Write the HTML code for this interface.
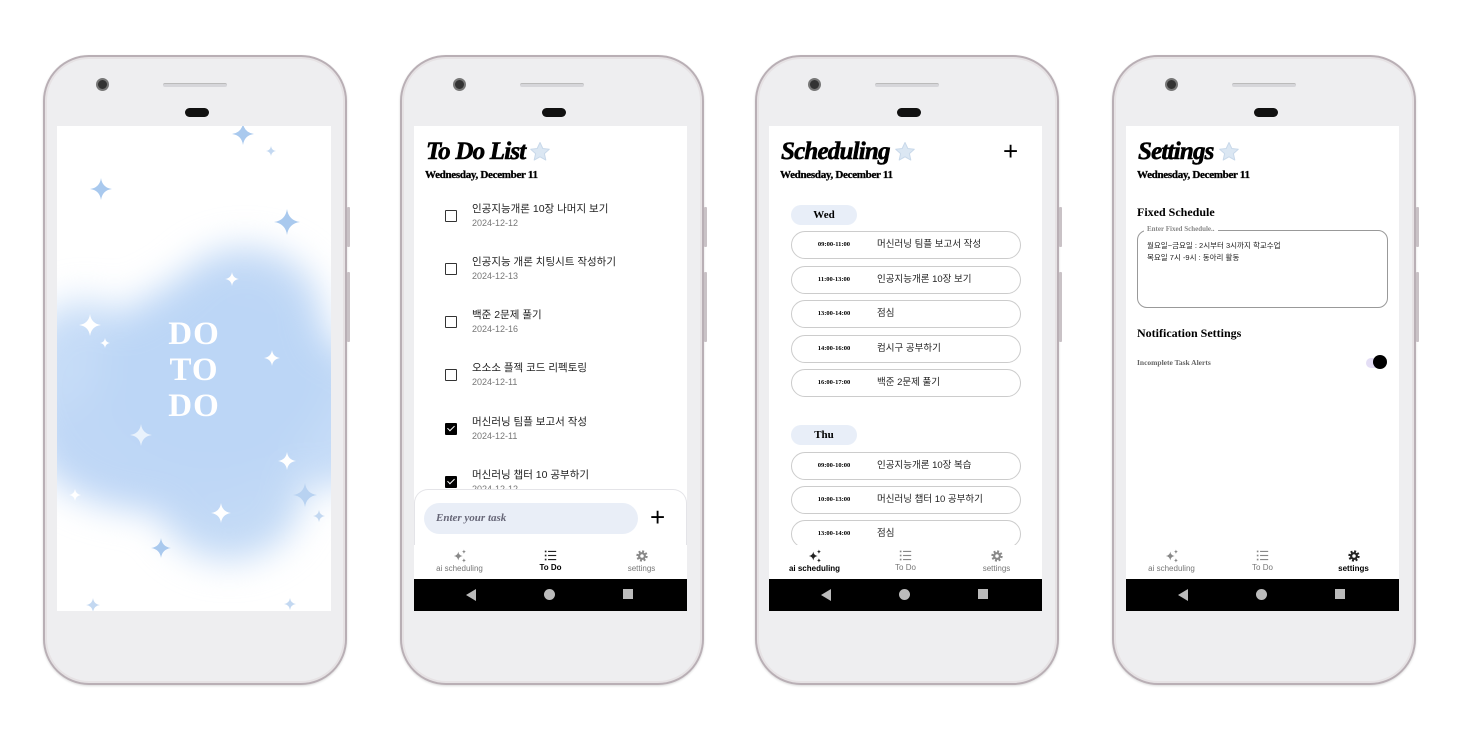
<!DOCTYPE html>
<html><head><meta charset="utf-8"><style>
*{box-sizing:border-box;margin:0;padding:0}
body{width:1466px;height:752px;background:#fff;position:relative;overflow:hidden;font-family:"Liberation Sans","Noto Sans CJK KR",sans-serif}
.ph{position:absolute;top:55px;width:304px;height:630px;border-radius:46px;background:#eeeef0;border:2px solid #b9afb5;box-shadow:inset 0 0 0 2px #e6e2e4,0 1px 2px rgba(0,0,0,.15)}
.cam{position:absolute;left:51px;top:21px;width:13px;height:13px;border-radius:50%;background:#333;border:2px solid #777}
.spk{position:absolute;left:118px;top:26px;width:64px;height:4px;border-radius:2px;background:#d6d6da;border-top:1px solid #bbb}
.ear{position:absolute;left:140px;top:51px;width:24px;height:9px;border-radius:5px;background:#111}
.btn{position:absolute;right:-5px;width:3px;background:#c9c2c6;border-radius:1px}
.sc{position:absolute;left:12px;top:69px;width:273px;height:485px;background:#fff;overflow:hidden}
.title{position:absolute;left:12px;top:12px;font-family:"Liberation Serif",serif;font-weight:bold;font-style:italic;font-size:25px;letter-spacing:-0.8px;color:#000;display:flex;align-items:center;-webkit-text-stroke:0.6px #000}
.title svg{margin-left:3px}
.date{position:absolute;left:11px;top:43px;font-family:"Liberation Serif",serif;font-weight:bold;font-size:11px;letter-spacing:-0.3px;-webkit-text-stroke:0.3px #000}
.nav{position:absolute;left:0;top:419px;width:273px;height:34px;background:#fff;display:flex}
.nav div{flex:1;text-align:center;font-size:8px;color:#777;padding-top:4px}
.nav div.on{color:#000;font-weight:bold}
.nav svg{display:block;margin:0 auto 1px}
.sys{position:absolute;left:0;top:453px;width:273px;height:32px;background:#000}
.sys .b{position:absolute;top:10px;left:52px;width:0;height:0;border-top:6px solid transparent;border-bottom:6px solid transparent;border-right:10px solid #bbb}
.sys .c{position:absolute;top:10px;left:130px;width:11px;height:11px;border-radius:50%;background:#bbb}
.sys .s{position:absolute;top:10px;left:209px;width:10px;height:10px;background:#bbb}
.item{position:absolute;left:31px;width:220px}
.cb{position:absolute;left:0;top:9px;width:12px;height:12px;border:1.5px solid #333;border-radius:1px}
.cb.on{background:#000;border-color:#000}
.cb.on:after{content:"";position:absolute;left:3px;top:0px;width:3px;height:6px;border:solid #fff;border-width:0 1.5px 1.5px 0;transform:rotate(45deg)}
.it{position:absolute;left:27px;top:0;font-size:10.5px;color:#222;white-space:nowrap}
.id{position:absolute;left:27px;top:17px;font-size:9px;color:#777}
.pill{position:absolute;left:22px;width:66px;height:20px;border-radius:10px;background:#e8eef8;font-family:"Liberation Serif",serif;font-weight:bold;font-size:11px;text-align:center;line-height:20px}
.row{position:absolute;left:22px;width:230px;height:28px;border:1px solid #ccc;border-radius:14px}
.row .t{position:absolute;left:0;width:84px;text-align:center;top:0;line-height:26px;font-family:"Liberation Serif",serif;font-weight:bold;font-size:6.5px}
.row .n{position:absolute;left:85px;top:0;line-height:26px;font-size:9.5px;color:#222}
.spark{position:absolute}
</style></head><body>

<svg width="0" height="0" style="position:absolute"><defs>
<symbol id="sp" viewBox="-10 -10 20 20"><path d="M0 -10 Q1.2 -1.2 10 0 Q1.2 1.2 0 10 Q-1.2 1.2 -10 0 Q-1.2 -1.2 0 -10Z"/></symbol>
<symbol id="st" viewBox="0 0 24 24"><path d="M12 2.5l2.8 6 6.5.7-4.9 4.4 1.4 6.4L12 16.8 6.2 20l1.4-6.4L2.7 9.2l6.5-.7z" fill="#dbe7f3" stroke="#c9d9ea" stroke-width="1" stroke-linejoin="round"/></symbol>
<symbol id="ai" viewBox="0 0 16 16"><path d="M6 3 Q6.6 7.4 11 8 Q6.6 8.6 6 13 Q5.4 8.6 1 8 Q5.4 7.4 6 3Z"/><path d="M12.5 0.5 Q12.8 2.7 15 3 Q12.8 3.3 12.5 5.5 Q12.2 3.3 10 3 Q12.2 2.7 12.5 0.5Z"/><path d="M12.5 10.5 Q12.8 12.7 15 13 Q12.8 13.3 12.5 15.5 Q12.2 13.3 10 13 Q12.2 12.7 12.5 10.5Z"/></symbol>
<symbol id="ls" viewBox="0 0 16 16"><rect x="1" y="2" width="2" height="2"/><rect x="5" y="2.3" width="10" height="1.4"/><rect x="1" y="7" width="2" height="2"/><rect x="5" y="7.3" width="10" height="1.4"/><rect x="1" y="12" width="2" height="2"/><rect x="5" y="12.3" width="10" height="1.4"/></symbol>
<symbol id="gr" viewBox="0 0 16 16"><circle cx="8" cy="8" r="5.2" fill="none" stroke="currentColor" stroke-width="2.6" stroke-dasharray="2.2 1.88"/><circle cx="8" cy="8" r="4.5"/><circle cx="8" cy="8" r="2" fill="#fff"/></symbol>
</defs></svg>

<!-- Phone 1 -->
<div class="ph" style="left:43px">
<div class="cam"></div><div class="spk"></div><div class="ear"></div>
<div class="btn" style="top:150px;height:40px"></div><div class="btn" style="top:215px;height:70px"></div>
<div class="sc" style="width:274px">
 <div style="position:absolute;left:-60px;top:60px;width:400px;height:420px;filter:blur(16px);background:radial-gradient(ellipse 34% 26% at 55% 45%,#bcd6f6 75%,transparent 100%),radial-gradient(ellipse 22% 18% at 62% 30%,#c2d9f6 70%,transparent 100%),radial-gradient(ellipse 36% 18% at 42% 62%,#bfd7f6 75%,transparent 100%),radial-gradient(ellipse 22% 20% at 58% 72%,#c3daf6 70%,transparent 100%),radial-gradient(ellipse 20% 24% at 22% 48%,#c6dcf7 70%,transparent 100%),radial-gradient(ellipse 18% 20% at 82% 55%,#c6dcf7 70%,transparent 100%)"></div>
 <div style="position:absolute;left:0;width:274px;top:190px;text-align:center;color:#fff;font-family:'Liberation Serif',serif;font-weight:bold;font-size:33px;line-height:36px;letter-spacing:1px">DO<br>TO<br>DO</div>
 <svg class="spark" style="left:175px;top:-3px" width="22" height="22" fill="#a9c9ee"><use href="#sp"/></svg>
 <svg class="spark" style="left:209px;top:20px" width="10" height="10" fill="#c3d8f1"><use href="#sp"/></svg>
 <svg class="spark" style="left:33px;top:52px" width="22" height="22" fill="#a9c9ee"><use href="#sp"/></svg>
 <svg class="spark" style="left:217px;top:83px" width="26" height="26" fill="#a9c9ee"><use href="#sp"/></svg>
 <svg class="spark" style="left:168px;top:146px" width="14" height="14" fill="#fff"><use href="#sp"/></svg>
 <svg class="spark" style="left:22px;top:188px" width="22" height="22" fill="#fff"><use href="#sp"/></svg>
 <svg class="spark" style="left:43px;top:212px" width="10" height="10" fill="#fff"><use href="#sp"/></svg>
 <svg class="spark" style="left:207px;top:224px" width="16" height="16" fill="#fff"><use href="#sp"/></svg>
 <svg class="spark" style="left:73px;top:298px" width="22" height="22" fill="#e9f2fc"><use href="#sp"/></svg>
 <svg class="spark" style="left:221px;top:326px" width="18" height="18" fill="#fff"><use href="#sp"/></svg>
 <svg class="spark" style="left:12px;top:363px" width="12" height="12" fill="#fff"><use href="#sp"/></svg>
 <svg class="spark" style="left:236px;top:357px" width="24" height="24" fill="#b8d2f1"><use href="#sp"/></svg>
 <svg class="spark" style="left:256px;top:384px" width="12" height="12" fill="#c3d8f1"><use href="#sp"/></svg>
 <svg class="spark" style="left:154px;top:377px" width="20" height="20" fill="#fff"><use href="#sp"/></svg>
 <svg class="spark" style="left:94px;top:412px" width="20" height="20" fill="#a9c9ee"><use href="#sp"/></svg>
 <svg class="spark" style="left:29px;top:472px" width="14" height="14" fill="#c3d8f1"><use href="#sp"/></svg>
 <svg class="spark" style="left:227px;top:472px" width="12" height="12" fill="#c3d8f1"><use href="#sp"/></svg>
</div>
</div>

<!-- Phone 2 -->
<div class="ph" style="left:400px">
<div class="cam"></div><div class="spk"></div><div class="ear"></div>
<div class="btn" style="top:150px;height:40px"></div><div class="btn" style="top:215px;height:70px"></div>
<div class="sc">
 <div class="title">To Do List<svg width="24" height="24"><use href="#st"/></svg></div>
 <div class="date">Wednesday, December 11</div>
 <div class="item" style="top:75px"><div class="cb"></div><div class="it">인공지능개론 10장 나머지 보기</div><div class="id">2024-12-12</div></div>
 <div class="item" style="top:128px"><div class="cb"></div><div class="it">인공지능 개론 치팅시트 작성하기</div><div class="id">2024-12-13</div></div>
 <div class="item" style="top:181px"><div class="cb"></div><div class="it">백준 2문제 풀기</div><div class="id">2024-12-16</div></div>
 <div class="item" style="top:234px"><div class="cb"></div><div class="it">오소소 플젝 코드 리펙토링</div><div class="id">2024-12-11</div></div>
 <div class="item" style="top:288px"><div class="cb on"></div><div class="it">머신러닝 팀플 보고서 작성</div><div class="id">2024-12-11</div></div>
 <div class="item" style="top:341px"><div class="cb on"></div><div class="it">머신러닝 챕터 10 공부하기</div><div class="id">2024-12-12</div></div>
 <div style="position:absolute;left:0;top:363px;width:273px;height:60px;background:#fff;border:1px solid #e4e4e8;border-bottom:none;border-radius:14px 14px 0 0"></div>
 <div style="position:absolute;left:10px;top:377px;width:214px;height:31px;border-radius:16px;background:#e9eef7;font-family:'Liberation Serif',serif;font-weight:bold;font-style:italic;font-size:11px;color:#667;padding:9px 0 0 12px">Enter your task</div>
 <div style="position:absolute;left:236px;top:378px;font-size:26px;line-height:26px;color:#000">+</div>
 <div class="nav">
  <div><svg width="14" height="14" fill="#888"><use href="#ai"/></svg>ai scheduling</div>
  <div class="on"><svg width="13" height="13" fill="#222"><use href="#ls"/></svg>To Do</div>
  <div><svg width="14" height="14" fill="#888" color="#888"><use href="#gr"/></svg>settings</div>
 </div>
 <div class="sys"><div class="b"></div><div class="c"></div><div class="s"></div></div>
</div>
</div>

<!-- Phone 3 -->
<div class="ph" style="left:755px">
<div class="cam"></div><div class="spk"></div><div class="ear"></div>
<div class="btn" style="top:150px;height:40px"></div><div class="btn" style="top:215px;height:70px"></div>
<div class="sc">
 <div class="title">Scheduling<svg width="24" height="24"><use href="#st"/></svg></div>
 <div style="position:absolute;left:234px;top:10px;font-size:26px;color:#000">+</div>
 <div class="date">Wednesday, December 11</div>
 <div class="pill" style="top:79px">Wed</div>
 <div class="row" style="top:105px"><div class="t">09:00-11:00</div><div class="n">머신러닝 팀플 보고서 작성</div></div>
 <div class="row" style="top:140px"><div class="t">11:00-13:00</div><div class="n">인공지능개론 10장 보기</div></div>
 <div class="row" style="top:174px"><div class="t">13:00-14:00</div><div class="n">점심</div></div>
 <div class="row" style="top:209px"><div class="t">14:00-16:00</div><div class="n">컴시구 공부하기</div></div>
 <div class="row" style="top:243px"><div class="t">16:00-17:00</div><div class="n">백준 2문제 풀기</div></div>
 <div class="pill" style="top:299px">Thu</div>
 <div class="row" style="top:326px"><div class="t">09:00-10:00</div><div class="n">인공지능개론 10장 복습</div></div>
 <div class="row" style="top:360px"><div class="t">10:00-13:00</div><div class="n">머신러닝 챕터 10 공부하기</div></div>
 <div class="row" style="top:394px"><div class="t">13:00-14:00</div><div class="n">점심</div></div>
 <div class="nav">
  <div class="on"><svg width="14" height="14" fill="#222"><use href="#ai"/></svg>ai scheduling</div>
  <div><svg width="13" height="13" fill="#888"><use href="#ls"/></svg>To Do</div>
  <div><svg width="14" height="14" fill="#888" color="#888"><use href="#gr"/></svg>settings</div>
 </div>
 <div class="sys"><div class="b"></div><div class="c"></div><div class="s"></div></div>
</div>
</div>

<!-- Phone 4 -->
<div class="ph" style="left:1112px">
<div class="cam"></div><div class="spk"></div><div class="ear"></div>
<div class="btn" style="top:150px;height:40px"></div><div class="btn" style="top:215px;height:70px"></div>
<div class="sc">
 <div class="title">Settings<svg width="24" height="24"><use href="#st"/></svg></div>
 <div class="date">Wednesday, December 11</div>
 <div style="position:absolute;left:11px;top:79px;font-family:'Liberation Serif',serif;font-weight:bold;font-size:12px">Fixed Schedule</div>
 <div style="position:absolute;left:11px;top:104px;width:251px;height:78px;border:1px solid #999;border-radius:10px"></div>
 <div style="position:absolute;left:18px;top:99px;background:#fff;padding:0 3px;font-family:'Liberation Serif',serif;font-weight:bold;font-size:7px;color:#888">Enter Fixed Schedule..</div>
 <div style="position:absolute;left:21px;top:114px;font-size:7.5px;line-height:12px;color:#222">월요일~금요일 : 2시부터 3시까지 학교수업<br>목요일 7시 -9시 : 동아리 활동</div>
 <div style="position:absolute;left:11px;top:200px;font-family:'Liberation Serif',serif;font-weight:bold;font-size:12px">Notification Settings</div>
 <div style="position:absolute;left:11px;top:232px;font-family:'Liberation Serif',serif;font-weight:bold;font-size:7.5px;color:#666">Incomplete Task Alerts</div>
 <div style="position:absolute;left:240px;top:232px;width:20px;height:10px;border-radius:5px;background:#e4def5"></div>
 <div style="position:absolute;left:247px;top:229px;width:14px;height:14px;border-radius:50%;background:#000"></div>
 <div class="nav">
  <div><svg width="14" height="14" fill="#888"><use href="#ai"/></svg>ai scheduling</div>
  <div><svg width="13" height="13" fill="#888"><use href="#ls"/></svg>To Do</div>
  <div class="on"><svg width="14" height="14" fill="#222" color="#222"><use href="#gr"/></svg>settings</div>
 </div>
 <div class="sys"><div class="b"></div><div class="c"></div><div class="s"></div></div>
</div>
</div>

</body></html>
